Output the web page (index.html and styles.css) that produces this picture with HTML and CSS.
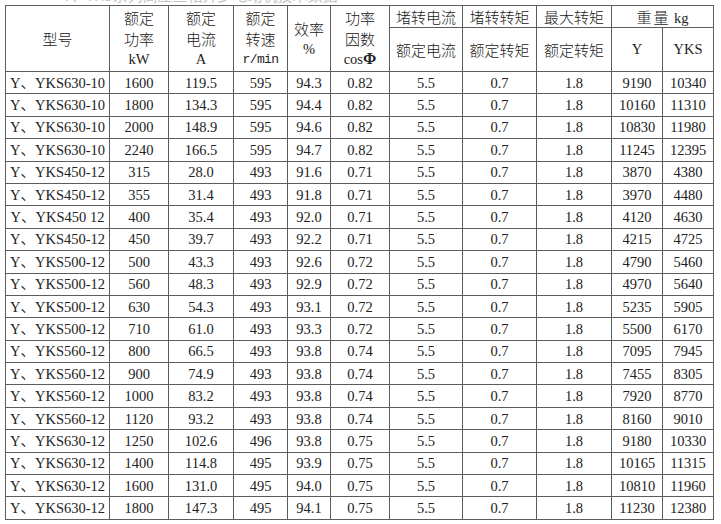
FILE: index.html
```html
<!DOCTYPE html>
<html lang="zh-CN">
<head>
<meta charset="utf-8">
<title>Y、YKS 系列电动机技术数据</title>
<link rel="stylesheet" href="styles.css">
</head>
<body>
<div class="page">
  <div class="caption"><span class="caption-text">Y、YKS系列高压三相异步电动机技术数据</span></div>
  <table class="spec">
    <colgroup>
      <col class="c-model">
      <col class="c-power">
      <col class="c-current">
      <col class="c-speed">
      <col class="c-eff">
      <col class="c-pf">
      <col class="c-lrc">
      <col class="c-lrt">
      <col class="c-max">
      <col class="c-wy">
      <col class="c-wyks">
    </colgroup>
    <thead>
      <tr class="h1">
        <th rowspan="2"><span class="ln cjk">型号</span></th>
        <th rowspan="2"><span class="ln cjk">额定</span><span class="ln cjk">功率</span><span class="ln">kW</span></th>
        <th rowspan="2"><span class="ln cjk">额定</span><span class="ln cjk">电流</span><span class="ln">A</span></th>
        <th rowspan="2"><span class="ln cjk">额定</span><span class="ln cjk">转速</span><span class="ln mono">r/min</span></th>
        <th rowspan="2"><span class="ln cjk">效率</span><span class="ln">%</span></th>
        <th rowspan="2"><span class="ln cjk">功率</span><span class="ln cjk">因数</span><span class="ln">cos<b class="phi">Φ</b></span></th>
        <th><span class="ln cjk">堵转电流</span></th>
        <th><span class="ln cjk">堵转转矩</span></th>
        <th><span class="ln cjk">最大转矩</span></th>
        <th colspan="2"><span class="ln"><span class="cjk wide">重量</span> kg</span></th>
      </tr>
      <tr class="h2">
        <th><span class="ln cjk">额定电流</span></th>
        <th><span class="ln cjk">额定转矩</span></th>
        <th><span class="ln cjk">额定转矩</span></th>
        <th><span class="ln">Y</span></th>
        <th><span class="ln">YKS</span></th>
      </tr>
    </thead>
    <tbody>
      <tr><td>Y、YKS630-10</td><td>1600</td><td>119.5</td><td>595</td><td>94.3</td><td>0.82</td><td>5.5</td><td>0.7</td><td>1.8</td><td>9190</td><td>10340</td></tr>
      <tr><td>Y、YKS630-10</td><td>1800</td><td>134.3</td><td>595</td><td>94.4</td><td>0.82</td><td>5.5</td><td>0.7</td><td>1.8</td><td>10160</td><td>11310</td></tr>
      <tr><td>Y、YKS630-10</td><td>2000</td><td>148.9</td><td>595</td><td>94.6</td><td>0.82</td><td>5.5</td><td>0.7</td><td>1.8</td><td>10830</td><td>11980</td></tr>
      <tr><td>Y、YKS630-10</td><td>2240</td><td>166.5</td><td>595</td><td>94.7</td><td>0.82</td><td>5.5</td><td>0.7</td><td>1.8</td><td>11245</td><td>12395</td></tr>
      <tr><td>Y、YKS450-12</td><td>315</td><td>28.0</td><td>493</td><td>91.6</td><td>0.71</td><td>5.5</td><td>0.7</td><td>1.8</td><td>3870</td><td>4380</td></tr>
      <tr><td>Y、YKS450-12</td><td>355</td><td>31.4</td><td>493</td><td>91.8</td><td>0.71</td><td>5.5</td><td>0.7</td><td>1.8</td><td>3970</td><td>4480</td></tr>
      <tr><td>Y、YKS450 12</td><td>400</td><td>35.4</td><td>493</td><td>92.0</td><td>0.71</td><td>5.5</td><td>0.7</td><td>1.8</td><td>4120</td><td>4630</td></tr>
      <tr><td>Y、YKS450-12</td><td>450</td><td>39.7</td><td>493</td><td>92.2</td><td>0.71</td><td>5.5</td><td>0.7</td><td>1.8</td><td>4215</td><td>4725</td></tr>
      <tr><td>Y、YKS500-12</td><td>500</td><td>43.3</td><td>493</td><td>92.6</td><td>0.72</td><td>5.5</td><td>0.7</td><td>1.8</td><td>4790</td><td>5460</td></tr>
      <tr><td>Y、YKS500-12</td><td>560</td><td>48.3</td><td>493</td><td>92.9</td><td>0.72</td><td>5.5</td><td>0.7</td><td>1.8</td><td>4970</td><td>5640</td></tr>
      <tr><td>Y、YKS500-12</td><td>630</td><td>54.3</td><td>493</td><td>93.1</td><td>0.72</td><td>5.5</td><td>0.7</td><td>1.8</td><td>5235</td><td>5905</td></tr>
      <tr><td>Y、YKS500-12</td><td>710</td><td>61.0</td><td>493</td><td>93.3</td><td>0.72</td><td>5.5</td><td>0.7</td><td>1.8</td><td>5500</td><td>6170</td></tr>
      <tr><td>Y、YKS560-12</td><td>800</td><td>66.5</td><td>493</td><td>93.8</td><td>0.74</td><td>5.5</td><td>0.7</td><td>1.8</td><td>7095</td><td>7945</td></tr>
      <tr><td>Y、YKS560-12</td><td>900</td><td>74.9</td><td>493</td><td>93.8</td><td>0.74</td><td>5.5</td><td>0.7</td><td>1.8</td><td>7455</td><td>8305</td></tr>
      <tr><td>Y、YKS560-12</td><td>1000</td><td>83.2</td><td>493</td><td>93.8</td><td>0.74</td><td>5.5</td><td>0.7</td><td>1.8</td><td>7920</td><td>8770</td></tr>
      <tr><td>Y、YKS560-12</td><td>1120</td><td>93.2</td><td>493</td><td>93.8</td><td>0.74</td><td>5.5</td><td>0.7</td><td>1.8</td><td>8160</td><td>9010</td></tr>
      <tr><td>Y、YKS630-12</td><td>1250</td><td>102.6</td><td>496</td><td>93.8</td><td>0.75</td><td>5.5</td><td>0.7</td><td>1.8</td><td>9180</td><td>10330</td></tr>
      <tr><td>Y、YKS630-12</td><td>1400</td><td>114.8</td><td>495</td><td>93.9</td><td>0.75</td><td>5.5</td><td>0.7</td><td>1.8</td><td>10165</td><td>11315</td></tr>
      <tr><td>Y、YKS630-12</td><td>1600</td><td>131.0</td><td>495</td><td>94.0</td><td>0.75</td><td>5.5</td><td>0.7</td><td>1.8</td><td>10810</td><td>11960</td></tr>
      <tr><td>Y、YKS630-12</td><td>1800</td><td>147.3</td><td>495</td><td>94.1</td><td>0.75</td><td>5.5</td><td>0.7</td><td>1.8</td><td>11230</td><td>12380</td></tr>
    </tbody>
  </table>
</div>
</body>
</html>
```

FILE: styles.css
```css
html, body {
  margin: 0;
  padding: 0;
  background: #ffffff;
}

.page {
  padding-left: 5px;
  font-family: "Liberation Serif", "Noto Sans CJK SC", serif;
  color: #222222;
}

.caption {
  height: 5px;
  overflow: hidden;
  padding-left: 58px;
}

.caption-text {
  display: block;
  margin-top: -13px;
  font-family: "Noto Sans CJK SC", sans-serif;
  font-size: 15px;
  line-height: 16px;
  color: #c4c4c4;
}

.spec {
  border-collapse: collapse;
  table-layout: fixed;
  width: 709px;
  font-size: 14.5px;
}

.c-model { width: 104px; }
.c-power { width: 59px; }
.c-current { width: 65px; }
.c-speed { width: 54px; }
.c-eff { width: 43px; }
.c-pf { width: 59px; }
.c-lrc { width: 73px; }
.c-lrt { width: 74px; }
.c-max { width: 75px; }
.c-wy { width: 51px; }
.c-wyks { width: 51px; }

.spec th,
.spec td {
  border: 1px solid #5c5c5c;
  padding: 0;
  text-align: center;
  vertical-align: middle;
  font-weight: normal;
  white-space: nowrap;
  overflow: hidden;
}

.spec th {
  line-height: 21px;
}

.ln {
  display: block;
  height: 21px;
  line-height: 21px;
  overflow: hidden;
}

.h1 th { height: 21px; }
.h2 th { height: 43px; }

.spec td {
  height: 21.4px;
  line-height: 18px;
}

.spec .cjk {
  font-family: "Noto Sans CJK SC", sans-serif;
  font-size: 15px;
  font-weight: 300;
}

.wide {
  letter-spacing: 2px;
}

.mono {
  font-family: "Liberation Mono", monospace;
  font-size: 13px;
  letter-spacing: -0.6px;
}

.phi {
  font-weight: bold;
  font-size: 16px;
  line-height: 1;
}
```
